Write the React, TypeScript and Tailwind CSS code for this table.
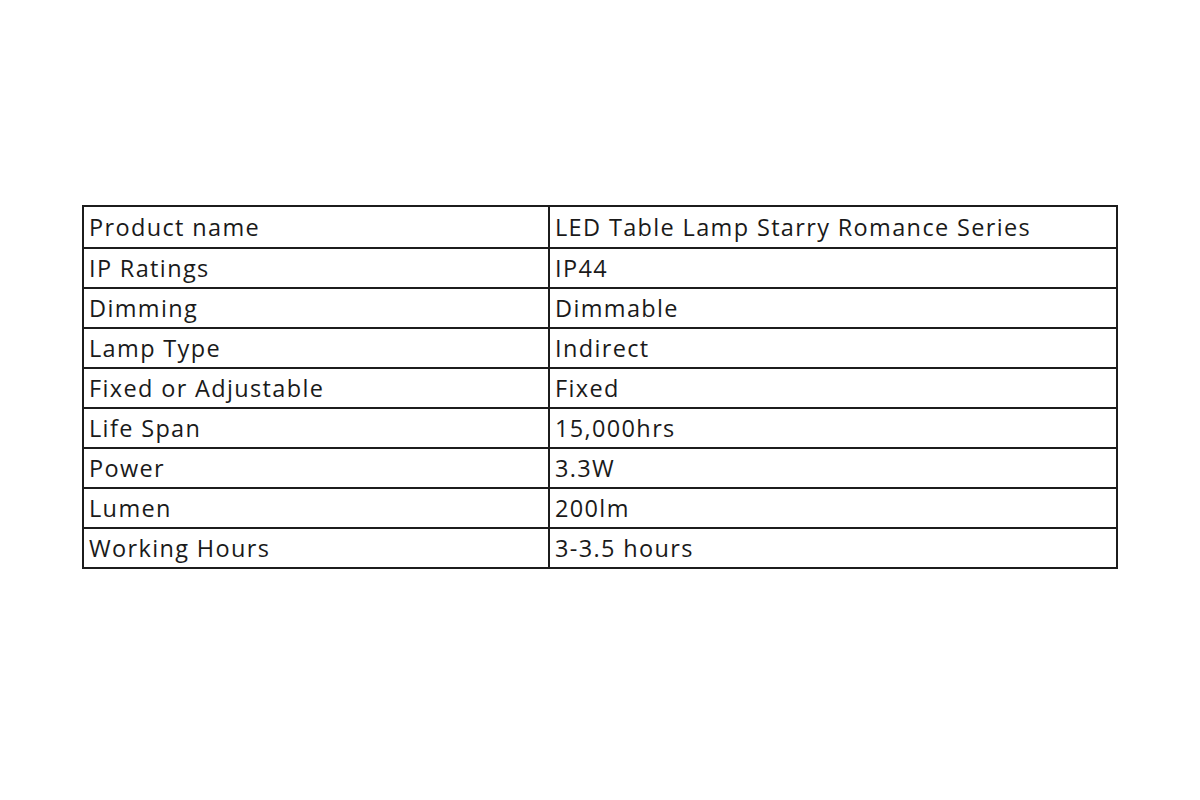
import React from "react";

const rows: [string, string][] = [
  ["Product name", "LED Table Lamp Starry Romance Series"],
  ["IP Ratings", "IP44"],
  ["Dimming", "Dimmable"],
  ["Lamp Type", "Indirect"],
  ["Fixed or Adjustable", "Fixed"],
  ["Life Span", "15,000hrs"],
  ["Power", "3.3W"],
  ["Lumen", "200lm"],
  ["Working Hours", "3-3.5 hours"],
];

export default function App() {
  return (
    <div className="w-[1200px] h-[800px] bg-white pt-[205px] pl-[82px]" style={{ fontFamily: '"Open Sans", sans-serif' }}>
      <div className="w-[1036px] border-2 border-[#1c1c1c]">
        {rows.map(([k, v], i) => (
          <div key={k} className={`grid grid-cols-[466px_1fr] h-[40px] ${i > 0 ? "border-t-2 border-[#1c1c1c]" : ""}`}>
            <div className="border-r-2 border-[#1c1c1c] pl-[5px] pt-[2px] flex items-center text-[23.5px] text-[#1a1a1a] leading-none tracking-[1.35px]">{k}</div>
            <div className="pl-[5px] pt-[2px] flex items-center text-[23.5px] text-[#1a1a1a] leading-none tracking-[1.35px]">{v}</div>
          </div>
        ))}
      </div>
    </div>
  );
}
